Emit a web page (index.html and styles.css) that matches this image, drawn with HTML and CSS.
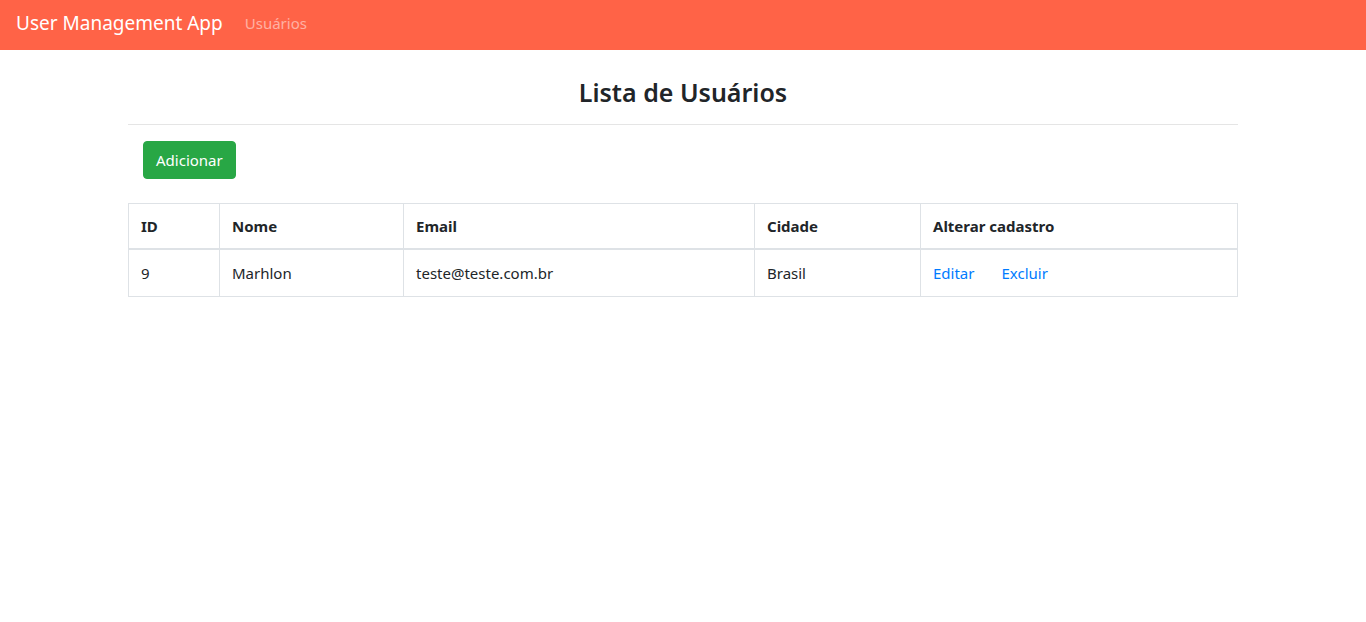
FILE: index.html
```html
<!DOCTYPE html>
<html lang="pt-BR">
<head>
<meta charset="utf-8">
<title>User Management App</title>
<link rel="stylesheet" href="styles.css">
</head>
<body>
<nav class="navbar">
  <a class="brand" href="#">User Management App</a>
  <a class="nav-link" href="#">Usuários</a>
</nav>
<main class="container">
  <h2 class="title">Lista de Usuários</h2>
  <hr class="divider">
  <div class="actions">
    <button class="btn-add" type="button">Adicionar</button>
  </div>
  <table class="users">
    <thead>
      <tr>
        <th class="c-id">ID</th>
        <th class="c-nome">Nome</th>
        <th class="c-email">Email</th>
        <th class="c-cidade">Cidade</th>
        <th class="c-alt">Alterar cadastro</th>
      </tr>
    </thead>
    <tbody>
      <tr>
        <td>9</td>
        <td>Marhlon</td>
        <td>teste@teste.com.br</td>
        <td>Brasil</td>
        <td><a class="link" href="#">Editar</a><a class="link" href="#">Excluir</a></td>
      </tr>
    </tbody>
  </table>
</main>
</body>
</html>
```
FILE: styles.css
```css
* { box-sizing: border-box; }
body {
  margin: 0;
  font-family: "Noto Sans", "Open Sans", sans-serif;
  font-size: 15px;
  line-height: 24px;
  color: #212529;
  background: #fff;
}
a { text-decoration: none; }
.navbar {
  height: 50px;
  background: #ff6347;
  display: flex;
  align-items: center;
  padding: 0 16px 5px;
}
.brand {
  color: #fff;
  font-size: 19px;
  line-height: 30px;
  margin-right: 22px;
}
.nav-link {
  color: rgba(255,255,255,0.5);
  font-size: 15px;
}
.container {
  width: 1110px;
  margin: 0 auto;
}
.title {
  margin: 24px 0 0;
  text-align: center;
  font-size: 25px;
  font-weight: 600;
  line-height: 36px;
}
.divider {
  margin: 14px 0 16px;
  border: 0;
  border-top: 1px solid #e5e5e5;
}
.actions {
  padding: 0 15px;
}
.btn-add {
  font: inherit;
  color: #fff;
  background: #28a745;
  border: 1px solid #28a745;
  border-radius: 4px;
  padding: 6px 12px;
  line-height: 24px;
  height: 38px;
}
.users {
  margin-top: 24px;
  width: 100%;
  border-collapse: collapse;
  table-layout: fixed;
}
.users th, .users td {
  border: 1px solid #dee2e6;
  padding: 11px 12px;
  text-align: left;
  vertical-align: top;
}
.users th { font-weight: 700; border-bottom-width: 2px; padding: 10px 12px; }
.c-id { width: 91px; }
.c-nome { width: 184px; }
.c-email { width: 351px; }
.c-cidade { width: 166px; }
.link { color: #007bff; margin-right: 27px; }
```
